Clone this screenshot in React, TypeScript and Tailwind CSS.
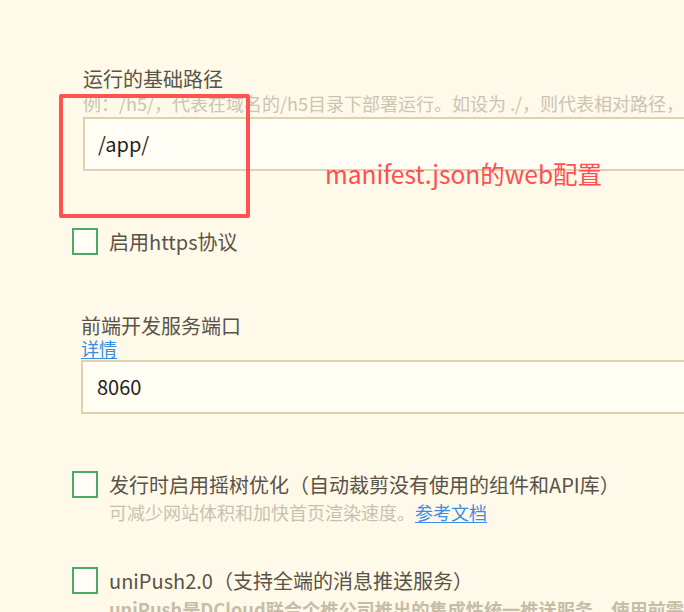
import React from "react";

const font = { fontFamily: '"Noto Sans CJK SC", "Noto Sans", sans-serif' };

function Box() {
  return <div className="w-[26px] h-[27px] shrink-0 border-2 border-[#4caa68] bg-[#fffdf5]" />;
}

export default function App() {
  return (
    <div
      className="relative w-[684px] h-[612px] overflow-hidden bg-[#fef9e8] text-[#5a5348]"
      style={font}
    >
      <div className="pt-[67px]">
        {/* 运行的基础路径 */}
        <div className="ml-[83px]">
          <div className="text-[20px] leading-[24px] whitespace-nowrap">运行的基础路径</div>
          <div className="text-[18px] leading-[24px] text-[#cbc4b4] whitespace-nowrap">
            例：/h5/，代表在域名的/h5目录下部署运行。如设为 ./，则代表相对路径，
          </div>
          <div className="mt-[2px] w-[700px] h-[54px] border-2 border-[#ddd3ae] bg-[#fffdf4] flex items-center pl-[13px] text-[20px] text-[#1f1f1f]">
            /app/
          </div>
        </div>

        {/* https */}
        <div className="mt-[57px] ml-[72px] flex items-center gap-[11px]">
          <Box />
          <span className="text-[20px] leading-[27px]">启用https协议</span>
        </div>

        {/* 前端开发服务端口 */}
        <div className="ml-[81px] mt-[59px]">
          <div className="text-[20px] leading-[23px] whitespace-nowrap">前端开发服务端口</div>
          <div className="text-[18px] leading-[22px]">
            <span className="text-[#3a8ee6] underline underline-offset-2">详情</span>
          </div>
          <div className="mt-[1px] w-[700px] h-[54px] border-2 border-[#ddd3ae] bg-[#fffdf4] flex items-center pl-[14px] text-[20px] text-[#1f1f1f]">
            8060
          </div>
        </div>

        {/* 摇树优化 */}
        <div className="mt-[57px] ml-[72px] flex items-start gap-[11px]">
          <Box />
          <div>
            <div className="text-[20px] leading-[27px] whitespace-nowrap">
              发行时启用摇树优化（自动裁剪没有使用的组件和API库）
            </div>
            <div className="mt-[2px] text-[18px] leading-[24px] text-[#c9c1b0] whitespace-nowrap">
              可减少网站体积和加快首页渲染速度。
              <span className="text-[#3a8ee6] underline underline-offset-2">参考文档</span>
            </div>
          </div>
        </div>

        {/* uniPush */}
        <div className="mt-[43px] ml-[72px] flex items-start gap-[11px]">
          <Box />
          <div>
            <div className="text-[20px] leading-[27px] whitespace-nowrap">
              uniPush2.0（支持全端的消息推送服务）
            </div>
            <div className="mt-[3px] text-[18.2px] leading-[24px] font-semibold text-[#c6bda8] whitespace-nowrap">
              uniPush是DCloud联合个推公司推出的集成性统一推送服务，使用前需
            </div>
          </div>
        </div>
      </div>

      {/* annotation overlay */}
      <div className="absolute left-[59px] top-[94px] w-[191px] h-[124px] border-4 border-[#ff5252] rounded-[2px]" />
      <div className="absolute left-[325px] top-[160px] text-[24.5px] leading-[28px] text-[#ff4f4f] whitespace-nowrap">
        manifest.json的web配置
      </div>
    </div>
  );
}
